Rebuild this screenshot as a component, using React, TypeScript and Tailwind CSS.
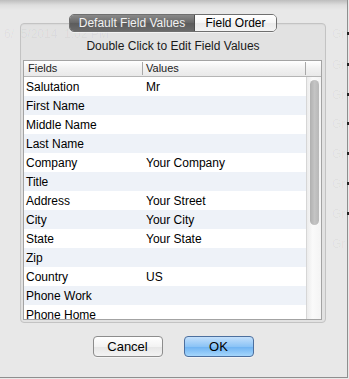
const rows: [string, string][] = [
  ["Salutation", "Mr"],
  ["First Name", ""],
  ["Middle Name", ""],
  ["Last Name", ""],
  ["Company", "Your Company"],
  ["Title", ""],
  ["Address", "Your Street"],
  ["City", "Your City"],
  ["State", "Your State"],
  ["Zip", ""],
  ["Country", "US"],
  ["Phone Work", ""],
  ["Phone Home", ""],
];

// faint glyphs of the window behind the translucent sheet
const ghostRows = [32, 63, 93, 122, 152, 182, 212, 242];

export default function App() {
  return (
    <div className="relative w-[349px] h-[379px] overflow-hidden bg-[#e9e9e9] font-['Liberation_Sans',Arial,sans-serif] text-black">
      <div className="w-[348px] h-[378px] border-r border-b border-[#8f8f8f] bg-[linear-gradient(to_bottom,#bdbdbd_0px,#dedede_5px,#e8e8e8_10px,#e8e8e8)]">
        {/* Segmented control */}
        <div className="pt-[14px] pl-[69px] relative z-10 mb-[-9px]">
          <div className="flex w-[208px] h-[18px] rounded-[5px] border border-[#6f6f6f] overflow-hidden text-[12px] leading-[16px] shadow-[0_1px_0_rgba(255,255,255,0.6)]">
            <div className="w-[125px] flex items-center justify-center bg-[linear-gradient(to_bottom,#8a8a8a,#666666_50%,#5c5c5c_51%,#6a6a6a)] text-[#f2f2f2] border-r border-[#4e4e4e]">
              Default Field Values
            </div>
            <div className="flex-1 flex items-center justify-center bg-[linear-gradient(to_bottom,#ffffff,#f6f6f6_50%,#ebebeb_51%,#f4f4f4)]">
              Field Order
            </div>
          </div>
        </div>

        {/* Group box */}
        <div className="ml-[20px] w-[306px] h-[300px] rounded-[4px] border border-[#c3c3c3] bg-[#e2e2e2] shadow-[inset_0_1px_1px_rgba(0,0,0,0.04)] flex flex-col">
          <div className="pt-[15px] h-[36px] text-center text-[12px] leading-[14px] text-[#1a1a1a]">
            Double Click to Edit Field Values
          </div>

          {/* Table */}
          <div className="ml-[2px] w-[299px] h-[260px] border border-[#a3a3a3] bg-white flex flex-col overflow-hidden">
            <div className="flex h-[16px] shrink-0 border-b border-[#b5b5b5] bg-[linear-gradient(to_bottom,#ffffff,#f1f1f1_50%,#e9e9e9)] text-[11px] leading-[15px] text-[#222]">
              <div className="w-[119px] pl-[4px] border-r border-[#a8a8a8] my-[1px] leading-[13px]">Fields</div>
              <div className="w-[163px] pl-[3px] border-r border-[#a8a8a8] my-[1px] leading-[13px]">Values</div>
              <div className="flex-1" />
            </div>
            <div className="flex flex-1 min-h-0">
              <div className="w-[282px] overflow-hidden">
                {rows.map(([field, value], i) => (
                  <div
                    key={field}
                    className={`flex h-[19px] items-center text-[12px] leading-[19px] pt-[1px] ${
                      i % 2 === 1 ? "bg-[#eef2f8]" : "bg-white"
                    }`}
                  >
                    <div className="w-[120px] pl-[2px]">{field}</div>
                    <div className="pl-[2px]">{value}</div>
                  </div>
                ))}
              </div>
              {/* Scrollbar */}
              <div className="flex-1 border-l border-[#d6d6d6] bg-[linear-gradient(to_right,#ececec,#fafafa_40%,#f4f4f4)] pt-[3px] pl-[3px]">
                <div className="w-[9px] h-[145px] rounded-full bg-[linear-gradient(to_right,#b0b0b0,#c4c4c4_50%,#b8b8b8)]" />
              </div>
            </div>
          </div>
        </div>

        {/* Buttons */}
        <div className="ml-[20px] w-[306px] mt-[13px] flex justify-center gap-[21px] text-[13px]">
          <button className="w-[70px] h-[21px] rounded-[4px] border border-[#8d8d8d] bg-[linear-gradient(to_bottom,#ffffff,#f3f3f3_50%,#e6e6e6_51%,#f3f3f3)] leading-[19px] shadow-[0_1px_0_rgba(255,255,255,0.5)]">
            Cancel
          </button>
          <button className="w-[70px] h-[21px] rounded-[4px] border border-[#4c6f9e] bg-[linear-gradient(to_bottom,#c4e0fb,#8cc4f6_50%,#6db2f2_51%,#a6d6fb)] leading-[19px] shadow-[0_1px_0_rgba(255,255,255,0.5)]">
            OK
          </button>
        </div>
      </div>

      {/* window behind the sheet, showing through */}
      <div className="absolute left-[4px] top-[25px] text-[12px] text-black/[0.045] pointer-events-none whitespace-pre">
        6/  5/2014  1:02 PM
      </div>
      {ghostRows.map((y) => (
        <div
          key={y}
          className="absolute left-[332px] text-[12px] text-black/[0.04] pointer-events-none"
          style={{ top: y - 7 }}
        >
          Gr
        </div>
      ))}
      {ghostRows.slice(0, 7).map((y) => (
        <div
          key={"d" + y}
          className="absolute left-[347px] w-[2px] h-[3px] bg-[#222]"
          style={{ top: y }}
        />
      ))}
    </div>
  );
}
